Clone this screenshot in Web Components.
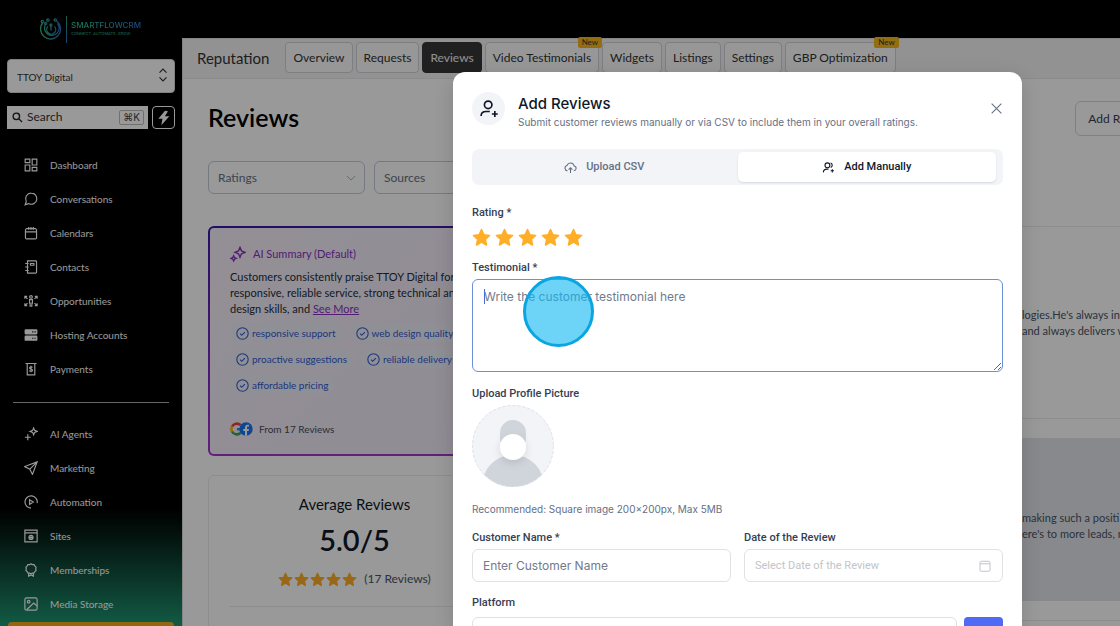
<!DOCTYPE html>
<html lang="en">
<head>
<meta charset="utf-8">
<title>Reputation – Reviews</title>
<style>
  html, body { height: 100%; }
  body { margin: 0; overflow: hidden; background: #000; font-family: Lato, sans-serif; }
</style>
</head>
<body>
<crm-app></crm-app>
<script>
const BASE = '*,*::before,*::after{box-sizing:border-box}button,input,select,textarea{font:inherit;color:inherit;margin:0}svg{display:block;flex:none}';
function define(name, css, html) {
  customElements.define(name, class extends HTMLElement {
    constructor() {
      super();
      this.attachShadow({ mode: 'open' });
    }
    connectedCallback() {
      const t = document.createElement('template');
      t.innerHTML = `<style>${BASE}${css}</style>${typeof html === 'function' ? html(this) : html}`;
      this.shadowRoot.replaceChildren(t.content.cloneNode(true));
    }
  });
}

const ICONS = {
  dashboard: '<path d="M2 2h8v6H2zM2 12h8v10H2zM14 2h8v10h-8zM14 16h8v6h-8z"/>',
  chat: '<path d="M12.5 2a9.500 9.500 0 1 1-3.800 18.200c-.5-.2-.8-.3-1.100-.2L2 21.800l1.800-5c.1-.4 0-.7-.1-1A9.500 9.500 0 0 1 12.500 2z"/>',
  calendar: '<path d="M5 4.500h14a2.500 2.500 0 0 1 2.500 2.500V20a2 2 0 0 1-2 2h-15a2 2 0 0 1-2-2V7A2.500 2.500 0 0 1 5 4.500zM2.500 10h19M8 1.500v5M12 1.500v5M16 1.500v5"/>',
  contacts: '<path d="M6 1.500h14A1.500 1.500 0 0 1 21.500 3v18a1.500 1.500 0 0 1-1.500 1.500H6zM2 6h6M2 12h6M2 18h6M11 6h6v3h-6z"/>',
  opportunities: '<circle cx="12" cy="5" r="2.300"/><path d="M9.500 9.500h5v6h-1V21h-3v-5.500h-1zM1.500 8V4h4M2 4.500l4 4M22.500 8V4h-4M22 4.500l-4 4M1.500 16v4h4M2 19.500l4-4M22.500 16v4h-4M22 19.500l-4-4"/>',
  hosting: '<g fill="currentColor" stroke="none"><path fill-rule="evenodd" d="M3 2h18a2 2 0 0 1 2 2v5a2 2 0 0 1-2 2H3a2 2 0 0 1-2-2V4a2 2 0 0 1 2-2zm11 3.500v2h2v-2zm4 0v2h2v-2z"/><path fill-rule="evenodd" d="M3 13h18a2 2 0 0 1 2 2v5a2 2 0 0 1-2 2H3a2 2 0 0 1-2-2v-5a2 2 0 0 1 2-2zm11 3.500v2h2v-2zm4 0v2h2v-2z"/></g>',
  payments: '<path d="M2.500 2.500h19M5.500 2.500V22h13V2.500"/><path d="M14.500 9.500c-.5-1-1.300-1.300-2.500-1.300-1.500 0-2.500.7-2.500 1.900 0 2.600 5.200 1.200 5.200 3.900 0 1.200-1.200 1.900-2.700 1.900s-2.300-.6-2.700-1.500M12 6.500v11"/>',
  agents: '<path d="M16.500 1.500l1.700 4.300 4.300 1.700-4.300 1.700-1.700 4.300-1.700-4.300-4.300-1.700 4.300-1.700zM6.500 12.500v10M1.500 17.500h10"/>',
  marketing: '<path d="M22.500 1.500L1 9.500l9 4.500 4.500 9zM22.500 1.500L10 14"/>',
  automation: '<path d="M12 22.500A10.500 10.500 0 1 1 22.500 14M9.500 8l6.500 4-6.500 4z"/>',
  sites: '<path d="M1.500 2h21v20h-21zM1.500 6.500h21"/><circle cx="12" cy="14.500" r="3.500"/><path d="M8.500 14.500h7M12 11v7"/>',
  memberships: '<path d="M12 1.500l2.500 1.200 2.800.1 1.400 2.500 2 1.900-.6 2.800.6 2.800-2 1.900-1.400 2.500-2.800.1-2.500 1.200-2.500-1.200-2.800-.1-1.400-2.500-2-1.900.6-2.800-.6-2.800 2-1.900 1.400-2.500 2.800-.1z"/><path d="M8 17v5.500l4-2 4 2V17"/>',
  media: '<rect x="1.500" y="1.500" width="21" height="21" rx="3"/><circle cx="8" cy="8" r="2.200"/><path d="M5 21.500L16.500 10.500l6 5"/>',
  updown: '<path d="M6 8l6-6 6 6M6 16l6 6 6-6"/>',
  down: '<path d="M2 7l10 10L22 7"/>',
  search: '<circle cx="9.500" cy="9.500" r="7"/><path d="M15 15l7 7"/>',
  bolt: '<path fill="currentColor" stroke="none" d="M13.500 1L3.500 13h6.200L8 23l12-13.500h-6.700L18 2z"/>',
  spark: '<path d="M15 2l2.200 5.300L22.500 9.500l-5.300 2.200L15 17l-2.200-5.300L7.500 9.500l5.300-2.200zM5.500 14.500l1.200 2.800 2.800 1.200-2.800 1.200-1.200 2.800-1.200-2.800-2.800-1.200 2.800-1.200z"/>',
  check: '<circle cx="12" cy="12" r="10.500"/><path d="M7.500 12.300l3 3 6-6"/>',
  star: '<path fill="currentColor" stroke="currentColor" stroke-linejoin="round" d="M12 2l3 6.600 7.200.8-5.400 4.900 1.500 7.100L12 17.800l-6.300 3.600 1.500-7.100-5.400-4.900 7.200-.8z"/>',
  userplus: '<circle cx="11" cy="7" r="4.500"/><path d="M2.500 20.500c0-4 2.500-5.500 6-5.500h4.500M19 14.500v7M15.500 18h7"/>',
  users: '<circle cx="10" cy="8" r="4.500"/><path d="M2.500 21c.3-4 2.500-6 6-6h3.500M16 3.800a4.500 4.500 0 0 1 0 8.400M19 15v6M16 18h6"/>',
  upload: '<path d="M6.500 18A5 5 0 0 1 5.500 8.200a7 7 0 0 1 13.300.9A4.500 4.500 0 0 1 18 18M12 22v-9M8.500 16l3.500-3.500 3.500 3.500"/>',
  close: '<path d="M3 3l18 18M21 3L3 21"/>',
  date: '<rect x="2" y="2.500" width="20" height="20" rx="2.500"/><path d="M2 7.500h20"/>'
};
define('ui-icon',
  ':host{display:block;flex:none;line-height:0}',
  el => { const s = el.getAttribute('size') || 14;
    return `<svg aria-hidden="true" width="${s}" height="${s}" viewBox="0 0 24 24" fill="none" stroke="currentColor" stroke-width="${el.getAttribute('weight') || 2}">${ICONS[el.getAttribute('name')]}</svg>`; });

define('brand-logo', `
  :host{display:flex;align-items:center;gap:4px;height:28px;color:#2fa982}
  .rule{width:1px;height:27px;background:linear-gradient(#2f9c8c,#2470b0)}
  .name{font:500 8px/10px Inter,sans-serif;background:linear-gradient(90deg,#35cf8c,#2f7fe0);-webkit-background-clip:text;background-clip:text;color:transparent}
  .tag{font:500 4px/8px Inter,sans-serif;color:#2a927c}
`, `
  <svg width="22" height="24" viewBox="0 0 22 24" fill="none" stroke="url(#g)" stroke-width="1.300">
    <defs><linearGradient id="g"><stop offset="0" stop-color="#33b876"/><stop offset="1" stop-color="#2a6cba"/></linearGradient></defs>
    <path d="M3 5.500A10 10 0 1 0 16.500 4M5.500 7.500a7.300 7.300 0 1 0 12-1M8 9.500a4.500 4.500 0 1 0 6.500 0M11 13.500V9"/>
    <circle cx="2.500" cy="4.500" r="1.200"/><circle cx="8" cy="3" r="1.200"/><circle cx="15.500" cy="3" r="1.200"/><circle cx="5.800" cy="6.500" r="1"/><circle cx="11" cy="8" r="1"/>
  </svg>
  <span class="rule"></span>
  <div><div class="name">SMARTFLOWCRM</div><div class="tag">CONNECT. AUTOMATE. GROW</div></div>
`);

define('nav-item', `
  :host{display:block}
  a{display:flex;align-items:center;gap:12px;height:34px;padding-left:24px;color:inherit;text-decoration:none;font-size:10px;line-height:16px}
`, el => `<a href="#"><ui-icon name="${el.getAttribute('icon')}"></ui-icon><slot></slot></a>`);

define('side-bar', `
  :host{display:flex;flex-direction:column;height:100vh;color:#fff;background:linear-gradient(#000 81%,#061b15 85%,#1f9772 100%);overflow:hidden}
  brand-logo{margin:15px 0 16px 40px;flex:none}
  .account{position:relative;margin:0 7px;color:#333;flex:none}
  .account select{appearance:none;width:100%;height:34px;border:1px solid #d5d7da;border-radius:4px;background:#fff;padding:2px 9px 0;font-size:10px}
  .account ui-icon{position:absolute;right:5px;top:9px}
  .tools{display:flex;gap:4px;margin:13px 7px 19px;flex:none}
  .search{flex:1;min-width:0;display:flex;align-items:center;gap:4px;height:23px;background:#fff;padding:0 4px 0 5px;color:#222}
  .search input{flex:1;min-width:0;border:0;background:none;padding:0 0 1px;outline:0;font-size:12px;line-height:16px}
  .search input::placeholder{color:#333;opacity:1}
  kbd{font:10px/13px Inter,sans-serif;border:1px solid #bbb;border-radius:2px;padding:0 3px;color:#444}
  .tools button{width:23px;height:23px;padding:0;display:grid;place-items:center;border:1px solid #fff;border-radius:4px;background:#000;color:#fff}
  hr{width:auto;margin:16px 13px 14px;border:0;height:1px;background:#aaa;flex:none}
  .promo{margin:1px 8px 0;height:28px;border-radius:4px;background:#f5ac19;flex:none}
`, `
  <brand-logo></brand-logo>
  <div class="account"><select aria-label="Account"><option>TTOY Digital</option></select><ui-icon name="updown"></ui-icon></div>
  <div class="tools">
    <label class="search"><ui-icon name="search" size="11" weight="3"></ui-icon><input placeholder="Search" aria-label="Search"><kbd>⌘K</kbd></label>
    <button aria-label="Quick actions"><ui-icon name="bolt" size="16"></ui-icon></button>
  </div>
  <nav>
    <nav-item icon="dashboard">Dashboard</nav-item>
    <nav-item icon="chat">Conversations</nav-item>
    <nav-item icon="calendar">Calendars</nav-item>
    <nav-item icon="contacts">Contacts</nav-item>
    <nav-item icon="opportunities">Opportunities</nav-item>
    <nav-item icon="hosting">Hosting Accounts</nav-item>
    <nav-item icon="payments">Payments</nav-item>
  </nav>
  <hr>
  <nav>
    <nav-item icon="agents">AI Agents</nav-item>
    <nav-item icon="marketing">Marketing</nav-item>
    <nav-item icon="automation">Automation</nav-item>
    <nav-item icon="sites">Sites</nav-item>
    <nav-item icon="memberships">Memberships</nav-item>
    <nav-item icon="media">Media Storage</nav-item>
  </nav>
  <div class="promo"></div>
`);

define('tab-button', `
  :host{display:block;position:relative;flex:none}
  button{display:block;height:31px;padding:0 7px;border:1px solid #d0d3d8;border-radius:4px;background:#fcfcfc;color:#333;font-size:12px;line-height:16px;white-space:nowrap}
  :host([active]) button{background:#363636;border-color:#363636;color:#f2f2f2}
  .badge{position:absolute;right:-3px;top:-5px;padding:0 4px;border-radius:2px;background:#f5b81c;color:#333;font:8px/11px Lato,sans-serif}
`, el => `<button><slot></slot></button>${el.hasAttribute('badge') ? `<span class="badge">${el.getAttribute('badge')}</span>` : ''}`);

define('top-bar', `
  :host{display:flex;align-items:center;gap:3px;height:40px;padding:0 0 2px 14px;background:#f3f3f3;border-bottom:1px solid #e8e8e8}
  h2{margin:0 13px 0 0;font-size:15px;line-height:20px;font-weight:400;color:#333}
`, `
  <h2>Reputation</h2>
  <tab-button>Overview</tab-button>
  <tab-button>Requests</tab-button>
  <tab-button active>Reviews</tab-button>
  <tab-button badge="New">Video Testimonials</tab-button>
  <tab-button>Widgets</tab-button>
  <tab-button>Listings</tab-button>
  <tab-button>Settings</tab-button>
  <tab-button badge="New">GBP Optimization</tab-button>
`);

define('filter-select', `
  :host{display:block;position:relative;width:157px;flex:none;color:#667085}
  select{appearance:none;display:block;width:100%;height:33px;padding:0 9px;border:1px solid #c3cad5;border-radius:6px;background:#fff;font-size:12px}
  ui-icon{position:absolute;right:9px;top:12px;color:#98a2b3}
`, el => `<select aria-label="${el.getAttribute('label')}"><option>${el.getAttribute('label')}</option></select><ui-icon name="down" size="10"></ui-icon>`);

define('topic-chip', `
  :host{display:flex;align-items:center;gap:3px;height:18px;padding:0 6px;border-radius:9px;background:#eff1fb;color:#3358cf;font-size:10px;line-height:16px;white-space:nowrap}
`, `<ui-icon name="check" size="13"></ui-icon><slot></slot>`);

define('ai-summary', `
  :host{display:block;height:230px;padding:17px 20px 0;border:2px solid transparent;border-radius:6px;
    background:linear-gradient(135deg,#f6effa,#f0eaf6) padding-box,linear-gradient(#3b18a8,#a534cf) border-box;color:#222d3d}
  h3{display:flex;align-items:center;gap:7px;margin:0;font-size:11px;line-height:18px;font-weight:400;color:#8a2fc4}
  p{margin:6px 0 7px;font-size:11px;line-height:16px}
  a{color:#8a2fc4}
  .chips{display:flex;flex-wrap:wrap;gap:8px}
  .from{display:flex;align-items:center;gap:6px;margin-top:27px;font-size:10px;line-height:16px;color:#444d5c}
`, `
  <h3><ui-icon name="spark" size="16"></ui-icon>AI Summary (Default)</h3>
  <p>Customers consistently praise TTOY Digital for responsive, reliable service, strong technical and design skills, and <a href="#">See More</a></p>
  <div class="chips">
    <topic-chip>responsive support</topic-chip><topic-chip>web design quality</topic-chip>
    <topic-chip>proactive suggestions</topic-chip><topic-chip>reliable delivery</topic-chip>
    <topic-chip>affordable pricing</topic-chip>
  </div>
  <div class="from">
    <svg width="23" height="14" viewBox="0 0 23 14">
      <g fill="none" stroke-width="2.600"><path stroke="#ea4335" d="M2 4.500A5.500 5.500 0 0 1 10.500 3"/><path stroke="#fbbc05" d="M2 9.500a5.500 5.500 0 0 1 0-5"/><path stroke="#34a853" d="M10.500 11A5.500 5.500 0 0 1 2 9.500"/><path stroke="#4285f4" d="M7 7.200h5.200A5.500 5.500 0 0 1 10.500 11"/></g>
      <circle cx="16" cy="7" r="6.700" fill="#1877f2"/><path fill="#fff" d="M15 13.700V9h-1.800V7H15V5.600c0-1.900 1.100-2.900 2.700-2.900l1.300.1v1.700h-.9c-.8 0-1.100.5-1.100 1.100V7h2l-.4 2H17v4.700z"/>
    </svg>From 17 Reviews
  </div>
`);

define('star-row', `
  :host{display:flex;gap:var(--star-gap,2px);color:#ffae27}
  button{border:0;background:none;padding:0;display:block;color:inherit}
`, el => [1, 2, 3, 4, 5].map(n => el.hasAttribute('editable')
    ? `<button aria-label="${n} stars"><ui-icon name="star" size="${el.getAttribute('size')}"></ui-icon></button>`
    : `<ui-icon name="star" size="${el.getAttribute('size')}"></ui-icon>`).join(''));

define('average-card', `
  :host{display:flex;flex-direction:column;align-items:center;height:200px;padding:17px 20px 0;border:1px solid #eaecf0;border-radius:6px;color:#101828}
  h3{margin:0;font-size:15px;line-height:22px;font-weight:400}
  .score{margin-top:7px;font-size:29px;line-height:36px;font-weight:600}
  .line{display:flex;align-items:center;gap:7px;margin-top:12px;font-size:12px;line-height:18px;color:#475467}
  hr{align-self:stretch;width:auto;margin:18px 0 0;border:0;height:1px;background:#eaecf0}
`, `
  <h3>Average Reviews</h3>
  <div class="score">5.0/5</div>
  <div class="line"><star-row size="15" style="--star-gap:1px"></star-row>(17 Reviews)</div>
  <hr>
`);

define('review-item', `
  :host{display:block;padding:80px 0 0 504px;border:1px solid #eaecf0;border-radius:6px;height:193px;font-size:11px;line-height:16px;color:#475467;white-space:nowrap;overflow:hidden}
  :host([selected]){height:163px;padding-top:71px;background:#e3e5e9;border-color:#e3e5e9}
`, `<slot></slot>`);

define('reviews-page', `
  :host{display:block;padding:22px 0 0 25px;overflow:hidden;background:#fff}
  .head{display:flex;justify-content:space-between;height:35px}
  h1{margin:0;font-size:25px;line-height:33px;font-weight:600;color:#000}
  .head button{height:35px;margin-right:-49px;padding:0 12px;border:1px solid #d0d5dd;border-radius:6px;background:#fff;color:#344054;font-size:12px;white-space:nowrap}
  .filters{display:flex;gap:9px;margin:25px 0 32px}
  .body{display:grid;grid-template-columns:293px minmax(0,1fr);gap:16px}
  .left{display:grid;gap:19px;align-content:start}
  .right{display:grid;gap:19px;align-content:start;margin-right:-20px}
`, `
  <div class="head"><h1>Reviews</h1><button>Add Reviews</button></div>
  <div class="filters"><filter-select label="Ratings"></filter-select><filter-select label="Sources"></filter-select></div>
  <div class="body">
    <div class="left"><ai-summary></ai-summary><average-card></average-card></div>
    <div class="right">
      <review-item>logies.He's always in<br>and always delivers w</review-item>
      <review-item selected>making such a positi<br>ere's to more leads, m</review-item>
      <review-item></review-item>
    </div>
  </div>
`);

define('add-reviews-dialog', `
  :host{display:block;height:100%;padding:20px 19px 0 19px;border-radius:12px 12px 0 0;background:#fff;color:#344054;font-family:Roboto,sans-serif;font-size:11px;line-height:18px;overflow:hidden;box-shadow:0 6px 20px rgba(0,0,0,.15)}
  header{display:flex;align-items:center;gap:13px;height:33px}
  .badge{display:grid;place-items:center;width:33px;height:33px;border-radius:50%;background:#f2f4f7;color:#101828}
  .titles{flex:1;min-width:0;padding-top:6px}
  h2{margin:0;font:500 15px/20px Inter,sans-serif;color:#101828}
  .titles p{margin:0;font:10px/16px Inter,sans-serif;color:#667085;white-space:nowrap}
  header button{border:0;background:none;padding:0;color:#667085}
  .seg{display:grid;grid-template-columns:1fr 1fr;gap:4px;height:36px;margin-top:24px;padding:3px 7px 3px 3px;border-radius:7px;background:#f2f4f7}
  .seg button{display:flex;align-items:center;justify-content:center;gap:9px;border:0;border-radius:5px;background:none;font-weight:500;color:#667085}
  .seg button[aria-selected=true]{background:#fff;color:#101828;box-shadow:0 1px 2px rgba(16,24,40,.12)}
  label,.label{display:block;font-weight:500}
  .rating{margin:19px 0 12px}
  .rating star-row{margin-top:6px}
  .area{position:relative;margin:2px 0 13px}
  textarea{display:block;width:100%;height:93px;padding:8px 11px;border:1px solid #6d8fd6;border-radius:6px;outline:0;resize:vertical;font:12px/17px Inter,sans-serif}
  ::placeholder{color:#717b8c;opacity:1}
  .caret{position:absolute;left:12px;top:10px;width:1px;height:15px;background:#4a6bd0}
  .click{position:absolute;left:51px;top:-3px;width:71px;height:71px;border-radius:50%;border:3px solid #0ba5e2;background:rgba(20,184,242,.62)}
  .avatar{display:block;margin:2px 0 14px}
  .hint{margin:0 0 12px;font:10px/16px Inter,sans-serif;color:#667085}
  .pair{display:grid;grid-template-columns:1fr 1fr;gap:13px;margin-bottom:12px}
  .field{position:relative;margin-top:2px}
  .field input,.platform select{display:block;width:100%;height:33px;padding:0 10px;border:1px solid #dfe1e5;border-radius:6px;background:#fff;outline:0}
  #name{font:12px/17px Inter,sans-serif}
  #date::placeholder{color:#c2c4c9}
  .field ui-icon{position:absolute;right:12px;top:11px;color:#c2c4c9}
  .platform{display:flex;gap:7px;margin-top:5px}
  .platform select{appearance:none;flex:1}
  .platform button{width:39px;height:33px;border:0;border-radius:4px;background:#4f6bf5}
`, `
  <header>
    <span class="badge"><ui-icon name="userplus" size="20"></ui-icon></span>
    <div class="titles"><h2>Add Reviews</h2><p>Submit customer reviews manually or via CSV to include them in your overall ratings.</p></div>
    <button aria-label="Close"><ui-icon name="close" size="13"></ui-icon></button>
  </header>
  <div class="seg" role="tablist">
    <button role="tab" aria-selected="false"><ui-icon name="upload" size="13"></ui-icon>Upload CSV</button>
    <button role="tab" aria-selected="true"><ui-icon name="users" size="13"></ui-icon>Add Manually</button>
  </div>
  <div class="rating"><div class="label">Rating *</div><star-row editable size="19" style="--star-gap:4px"></star-row></div>
  <label for="text">Testimonial *</label>
  <div class="area"><textarea id="text" placeholder="Write the customer testimonial here"></textarea><span class="caret"></span><span class="click"></span></div>
  <div class="label">Upload Profile Picture</div>
  <svg class="avatar" width="82" height="82" viewBox="0 0 82 82">
    <defs><clipPath id="c"><circle cx="41" cy="41" r="41"/></clipPath><filter id="s" x="-50%" y="-50%" width="200%" height="200%"><feDropShadow dx="0" dy="3" stdDeviation="4" flood-opacity=".12"/></filter></defs>
    <g clip-path="url(#c)"><rect width="82" height="82" fill="#f2f4f8"/><rect x="28" y="15" width="26" height="31" rx="13" fill="#d0d5dc"/><circle cx="41" cy="81" r="31" fill="#d0d5dc"/></g>
    <circle cx="41" cy="41" r="40.500" fill="none" stroke="#dde1ee" stroke-dasharray="3 2"/>
    <circle cx="41" cy="42" r="13" fill="#fff" filter="url(#s)"/>
  </svg>
  <p class="hint">Recommended: Square image 200×200px, Max 5MB</p>
  <div class="pair">
    <div><label for="name">Customer Name *</label><div class="field"><input id="name" placeholder="Enter Customer Name"></div></div>
    <div><label for="date">Date of the Review</label><div class="field"><input id="date" placeholder="Select Date of the Review"><ui-icon name="date" size="12"></ui-icon></div></div>
  </div>
  <label for="platform">Platform</label>
  <div class="platform"><select id="platform"><option></option></select><button aria-label="Add platform"></button></div>
`);

define('crm-app', `
  :host{display:grid;grid-template-columns:182px minmax(0,1fr);height:100vh;position:relative;overflow:hidden}
  main{display:flex;flex-direction:column;min-width:0;margin-top:38px;background:#fff;border-left:1px solid #ddd;border-top:1px solid #ddd}
  top-bar{flex:none}
  reviews-page{flex:1;min-height:0}
  .overlay{position:absolute;inset:0;padding:72px 98px 0 453px;background:rgba(0,0,0,.4)}
`, `
  <side-bar></side-bar>
  <main><top-bar></top-bar><reviews-page></reviews-page></main>
  <div class="overlay"><add-reviews-dialog role="dialog" aria-label="Add Reviews"></add-reviews-dialog></div>
`);
</script>
</body>
</html>
